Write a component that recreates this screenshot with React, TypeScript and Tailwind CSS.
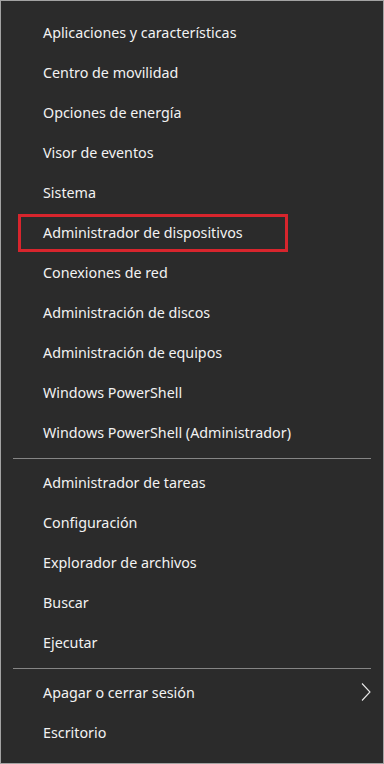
const groups: string[][] = [
  [
    'Aplicaciones y características',
    'Centro de movilidad',
    'Opciones de energía',
    'Visor de eventos',
    'Sistema',
    'Administrador de dispositivos',
    'Conexiones de red',
    'Administración de discos',
    'Administración de equipos',
    'Windows PowerShell',
    'Windows PowerShell (Administrador)',
  ],
  [
    'Administrador de tareas',
    'Configuración',
    'Explorador de archivos',
    'Buscar',
    'Ejecutar',
  ],
  ['Apagar o cerrar sesión', 'Escritorio'],
];

function Chevron() {
  return (
    <svg width="10" height="18" viewBox="0 0 10 18" fill="none" className="absolute right-[12px] top-[10px]">
      <path d="M1 0.5L9 9L1 17.5" stroke="#e8e8e8" strokeWidth="1.1" />
    </svg>
  );
}

function Item({ label }: { label: string }) {
  const highlighted = label === 'Administrador de dispositivos';
  return (
    <div className="relative h-10 flex items-center pl-[42px]">
      {highlighted && (
        <div className="absolute left-[17px] top-[1px] w-[270px] h-[38px] border-[3px] border-[#d7252d] pointer-events-none" />
      )}
      <span className="text-[14.3px] text-[#f2f2f2] leading-none">{label}</span>
      {label === 'Apagar o cerrar sesión' && <Chevron />}
    </div>
  );
}

export default function App() {
  return (
    <div
      className="w-[384px] h-[764px] bg-[#2b2b2b] border border-[#a3a3a3] pt-[12px] overflow-hidden"
      style={{ fontFamily: '"Noto Sans", "Open Sans", sans-serif' }}
    >
      {groups.map((group, gi) => (
        <div key={gi}>
          {gi > 0 && (
            <div className="h-[10px] flex items-center px-[12px]">
              <div className="h-px w-full bg-[#858585]" />
            </div>
          )}
          {group.map((label) => (
            <Item key={label} label={label} />
          ))}
        </div>
      ))}
    </div>
  );
}
